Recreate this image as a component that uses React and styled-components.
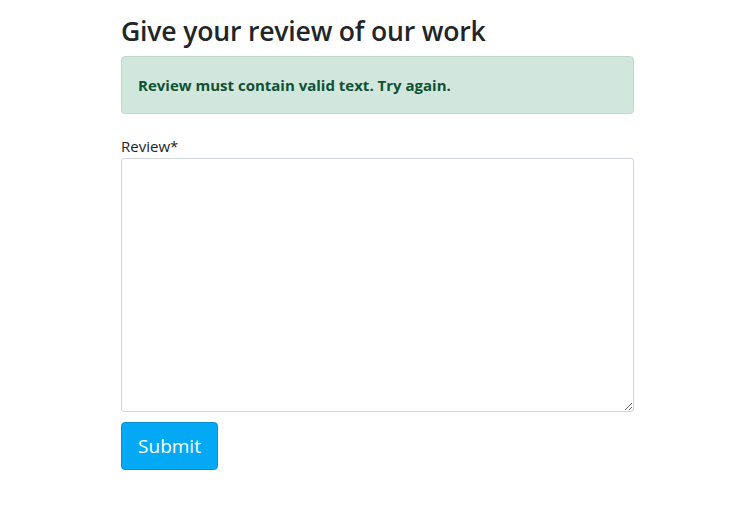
import React from 'react';
import styled, { createGlobalStyle } from 'styled-components';

const GlobalStyle = createGlobalStyle`
    body {
        margin: 0;
        background: #fff;
        font-family: "Open Sans", "Noto Sans", sans-serif;
        color: #212529;
    }
    * { box-sizing: border-box; }
`;

const Page = styled.main`
    width: 513px;
    margin-left: calc(50% - 250px);
    padding-top: 16px;
`;

const Title = styled.h3`
    font-size: 26.6px;
    font-weight: 600;
    line-height: 1.2;
    margin: 0 0 8px;
    letter-spacing: -0.2px;
`;

const Alert = styled.div`
    background: #d1e7dd;
    border: 1px solid #badbcc;
    border-radius: 4px;
    color: #0f5132;
    font-weight: 700;
    font-size: 15px;
    line-height: 24px;
    padding: 16px 16px 16px;
    margin-bottom: 20px;
`;

const Form = styled.form`
    display: flex;
    flex-direction: column;
    align-items: flex-start;
`;

const Label = styled.label`
    font-size: 15px;
    line-height: 24px;
    color: #212529;
`;

const TextArea = styled.textarea`
    width: 100%;
    height: 254px;
    border: 1px solid #ced4da;
    border-radius: 3px;
    padding: 6px 12px;
    font: inherit;
    margin-bottom: 10px;
    resize: vertical;
    outline: none;
`;

const SubmitButton = styled.button`
    background: #03a9f4;
    border: 1px solid #0a8fd6;
    border-radius: 4px;
    color: #fff;
    font-family: inherit;
    font-size: 19px;
    line-height: 30px;
    padding: 8px 16px;
    width: 97px;
    cursor: pointer;
`;

export default function App() {
    return (
        <>
            <GlobalStyle />
            <Page>
                <Title>Give your review of our work</Title>
                <Alert>Review must contain valid text. Try again.</Alert>
                <Form onSubmit={e => e.preventDefault()}>
                    <Label htmlFor="review">Review*</Label>
                    <TextArea id="review" />
                    <SubmitButton type="submit">Submit</SubmitButton>
                </Form>
            </Page>
        </>
    );
}
